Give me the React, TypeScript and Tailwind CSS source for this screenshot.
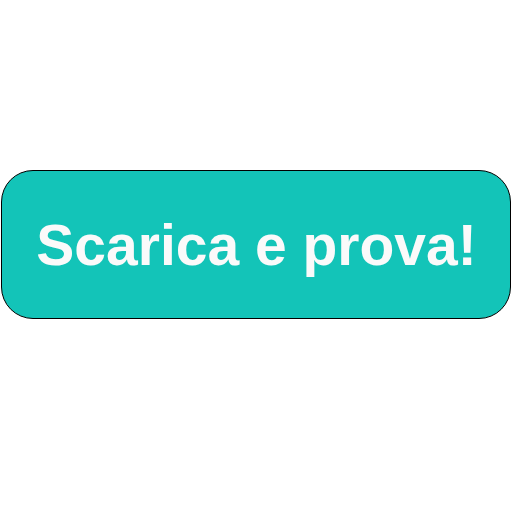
export default function App() {
  return (
    <div className="w-[512px] h-[512px] bg-white pt-[170px] pl-[1px] pr-[1px]">
      <div className="h-[149px] w-full flex justify-center items-center pt-[2px] pl-[1px] bg-[#13c4b8] border border-black rounded-[32px]">
        <span
          className="text-[57px] font-bold text-[#fafafa] leading-none"
          style={{ fontFamily: '"Liberation Sans", Arial, sans-serif' }}
        >
          Scarica e prova!
        </span>
      </div>
    </div>
  );
}
